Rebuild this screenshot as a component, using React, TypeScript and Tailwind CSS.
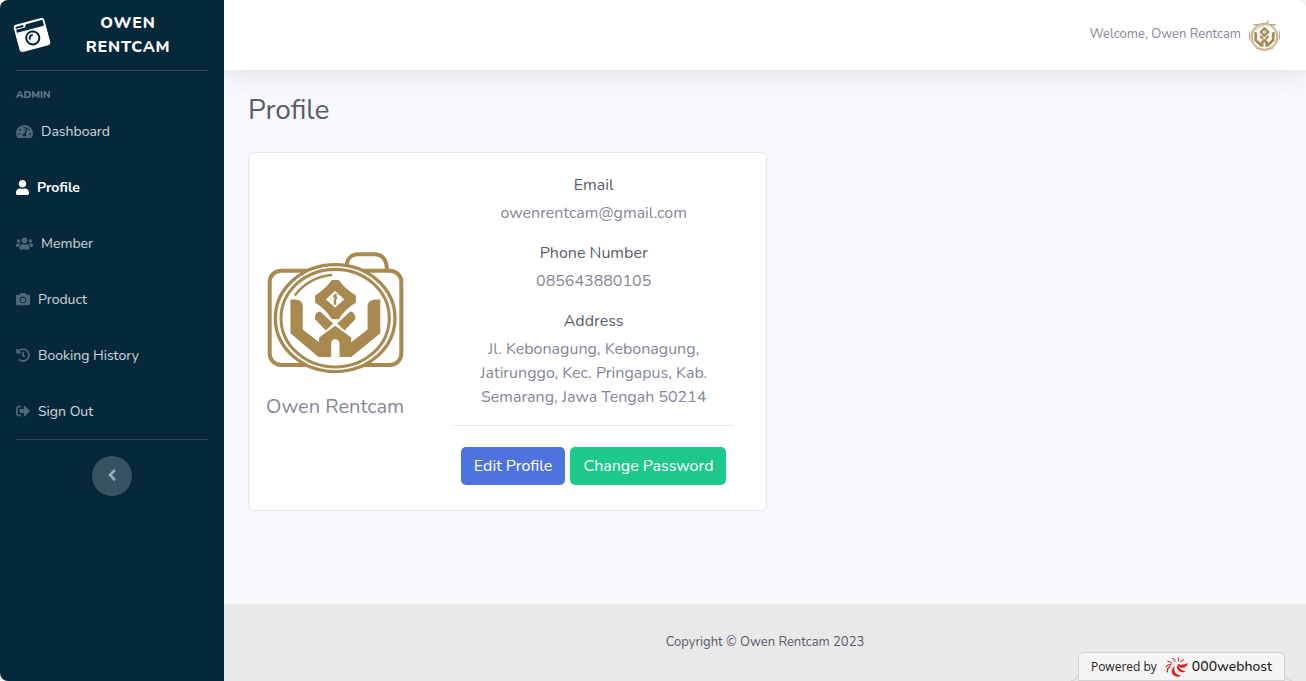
import React from "react";
import {
  FaAngleLeft,
  FaCamera,
  FaCameraRetro,
  FaHistory,
  FaSignOutAlt,
  FaTachometerAlt,
  FaUser,
  FaUsers,
} from "react-icons/fa";
import type { IconType } from "react-icons";

const NAV: { label: string; icon: IconType; size: string; active?: boolean }[] = [
  { label: "Dashboard", icon: FaTachometerAlt, size: "h-[15px] w-[17px]" },
  { label: "Profile", icon: FaUser, size: "h-[15px] w-[13px]", active: true },
  { label: "Member", icon: FaUsers, size: "h-[15px] w-[17px]" },
  { label: "Product", icon: FaCamera, size: "size-[14px]" },
  { label: "Booking History", icon: FaHistory, size: "size-[14px]" },
  { label: "Sign Out", icon: FaSignOutAlt, size: "size-[14px]" },
];

function Logo({ className, stretch }: { className: string; stretch?: boolean }) {
  return (
    <svg
      viewBox="36 36 410 364"
      preserveAspectRatio={stretch ? "none" : "xMidYMid meet"}
      className={className}
      role="img"
      aria-label="Owen Rentcam"
    >
      <g fill="none" stroke="#a8894f">
        <path d="M274 82C274 56 288 43 310 43H357C382 43 395 60 395 92" strokeWidth="12" />
        <rect x="44" y="92" width="394" height="282" rx="34" strokeWidth="12" />
        <ellipse cx="240" cy="234" rx="179" ry="160" fill="#fff" strokeWidth="10" />
        <ellipse cx="240" cy="234" rx="162" ry="146" strokeWidth="9" />
        <path d="M119 166Q160 112 231 104" strokeWidth="8" />
      </g>
      <g fill="#a8894f">
        <path
          fillRule="evenodd"
          d="M230 120H251Q268 146 302 166V188Q270 206 251 237H230Q211 206 180 188V166Q212 146 230 120ZM240 152L212 178L240 202L267 178Z"
        />
        <path d="M180 237V229Q182 216 195 214L234 250L212 271Z" />
        <path d="M300 237V229Q298 216 285 214L246 250L268 271Z" />
        <path d="M106 178H122Q141 180 143 196V268L192 306V292L240 257L288 292V306L337 268V196Q339 180 358 178H375V279L288 350H253V312Q253 297 240 297Q228 297 228 312V350H190L106 279Z" />
        <path d="M234 166L240 162L247 160L243 167L247 172L243 178V192L237 195L235 184L239 173L234 172Z" />
      </g>
    </svg>
  );
}

function HostMark() {
  return (
    <svg viewBox="0 0 68 58" className="h-5 w-[23px]" aria-hidden="true">
      <g fill="none" stroke="#e32119" strokeLinecap="round">
        <path d="M3 29Q8 21 18 21" strokeWidth="3" />
        <path d="M8 12Q14 12 19 17" strokeWidth="3" />
        <path d="M22 4Q28 6 30 12" strokeWidth="3" />
        <path d="M39 2Q42 6 39 11" strokeWidth="3" />
        <path d="M54 7Q51 12 46 13" strokeWidth="3" />
        <path d="M7 43Q6 32 16 26" strokeWidth="4" />
      </g>
      <g fill="#e32119">
        <path d="M68 17Q64 33 48 31Q38 28 37 20Q51 26 68 17Z" />
        <path d="M62 43Q43 48 36 34Q34 27 37 23Q45 39 62 43Z" />
        <path d="M48 54Q31 63 22 50Q16 37 29 25Q25 39 31 47Q37 54 48 54Z" />
      </g>
    </svg>
  );
}

function Field({ label, children }: { label: string; children: React.ReactNode }) {
  return (
    <div className="mb-4">
      <dt className="mb-1 leading-6 text-[#5a5c69]">{label}</dt>
      <dd className="leading-6">{children}</dd>
    </div>
  );
}

export default function App() {
  return (
    <div className="flex min-h-screen bg-white font-[Nunito,Lato,sans-serif] text-base text-[#858796]">
      <aside className="relative z-10 flex w-56 shrink-0 flex-col rounded-l-lg bg-[#05283b]">
        <a href="#" className="flex h-[70px] items-center pl-4 font-extrabold uppercase text-white">
          <FaCameraRetro className="size-8 shrink-0 -rotate-15" />
          <span className="mr-8 ml-4 flex-1 text-center text-base leading-6 tracking-wider">Owen Rentcam</span>
        </a>
        <hr className="mx-4 border-white/15" />
        <h2 className="px-4 pt-4 text-[10px] leading-4 font-extrabold text-white/40 uppercase">Admin</h2>
        <nav>
          {NAV.map(({ label, icon: Icon, size, active }) => (
            <a
              key={label}
              href="#"
              aria-current={active ? "page" : undefined}
              className={
                active
                  ? "flex h-14 items-center gap-2 px-4 pt-0.5 text-sm font-bold text-white"
                  : "flex h-14 items-center gap-2 px-4 pt-0.5 text-sm text-white/80"
              }
            >
              <span className={active ? "pb-0.5 text-white" : "pb-0.5 text-white/30"}>
                <Icon className={size} />
              </span>
              {label}
            </a>
          ))}
        </nav>
        <hr className="mx-4 border-white/15" />
        <button
          type="button"
          aria-label="Collapse sidebar"
          className="mt-4 flex size-10 items-center justify-center self-center rounded-full bg-white/20 pb-0.5 text-white/50"
        >
          <FaAngleLeft className="size-[18px]" />
        </button>
      </aside>

      <div className="flex min-w-0 flex-1 flex-col bg-[#f8f9fc]">
        <header className="flex h-[70px] items-center justify-end gap-2 rounded-tr-lg bg-white pr-[26px] shadow-[0_2px_28px_rgba(58,59,69,0.15)]">
          <span className="text-[13px]">Welcome, Owen Rentcam</span>
          <Logo stretch className="size-[31px] rounded-full" />
        </header>

        <main className="flex-1 px-6 pt-6">
          <h1 className="text-[28px] leading-8 text-[#5a5c69]">Profile</h1>
          <section className="mt-[26px] mb-6 flex max-w-[519px] rounded-md border border-[#e3e6f0] bg-white">
            <div className="flex w-1/3 flex-col items-center justify-center pt-2.5">
              <Logo className="h-auto w-[137px]" />
              <p className="mt-5 text-xl leading-7">Owen Rentcam</p>
            </div>
            <div className="flex-1 px-8 pt-5 pb-[25px] text-center">
              <dl className="px-5">
                <Field label="Email">owenrentcam@gmail.com</Field>
                <Field label="Phone Number">085643880105</Field>
                <Field label="Address">
                  Jl. Kebonagung, Kebonagung, Jatirunggo, Kec. Pringapus, Kab. Semarang, Jawa Tengah 50214
                </Field>
              </dl>
              <hr className="border-[#e3e4e8]" />
              <div className="mt-[21px] flex justify-center gap-[5px]">
                <button type="button" className="h-[38px] rounded-[5px] bg-[#4e73df] px-[13px] text-white">
                  Edit Profile
                </button>
                <button type="button" className="h-[38px] rounded-[5px] bg-[#1cc88a] px-[13px] text-white">
                  Change Password
                </button>
              </div>
            </div>
          </section>
        </main>

        <footer className="relative flex h-[77px] items-center justify-center bg-[#e9e9e9] text-[13px] text-[#5a5c69]">
          <span>Copyright © Owen Rentcam 2023</span>
          <a
            href="#"
            className="absolute right-[21px] bottom-0 flex h-[29px] items-center rounded-t-md border border-[#d2d2d2] bg-[#f5f5f5] px-3 font-['Open_Sans',sans-serif] text-xs text-[#222] before:absolute before:-left-2 before:-bottom-px before:size-2 before:rounded-br-lg before:border-r before:border-b before:border-[#d2d2d2] before:bg-[#e9e9e9] after:absolute after:-right-2 after:-bottom-px after:size-2 after:rounded-bl-lg after:border-b after:border-l after:border-[#d2d2d2] after:bg-[#e9e9e9]"
          >
            <span className="mr-2">Powered by</span>
            <HostMark />
            <span className="ml-1 font-[Nunito,sans-serif] text-sm font-medium">000webhost</span>
          </a>
        </footer>
      </div>
    </div>
  );
}
